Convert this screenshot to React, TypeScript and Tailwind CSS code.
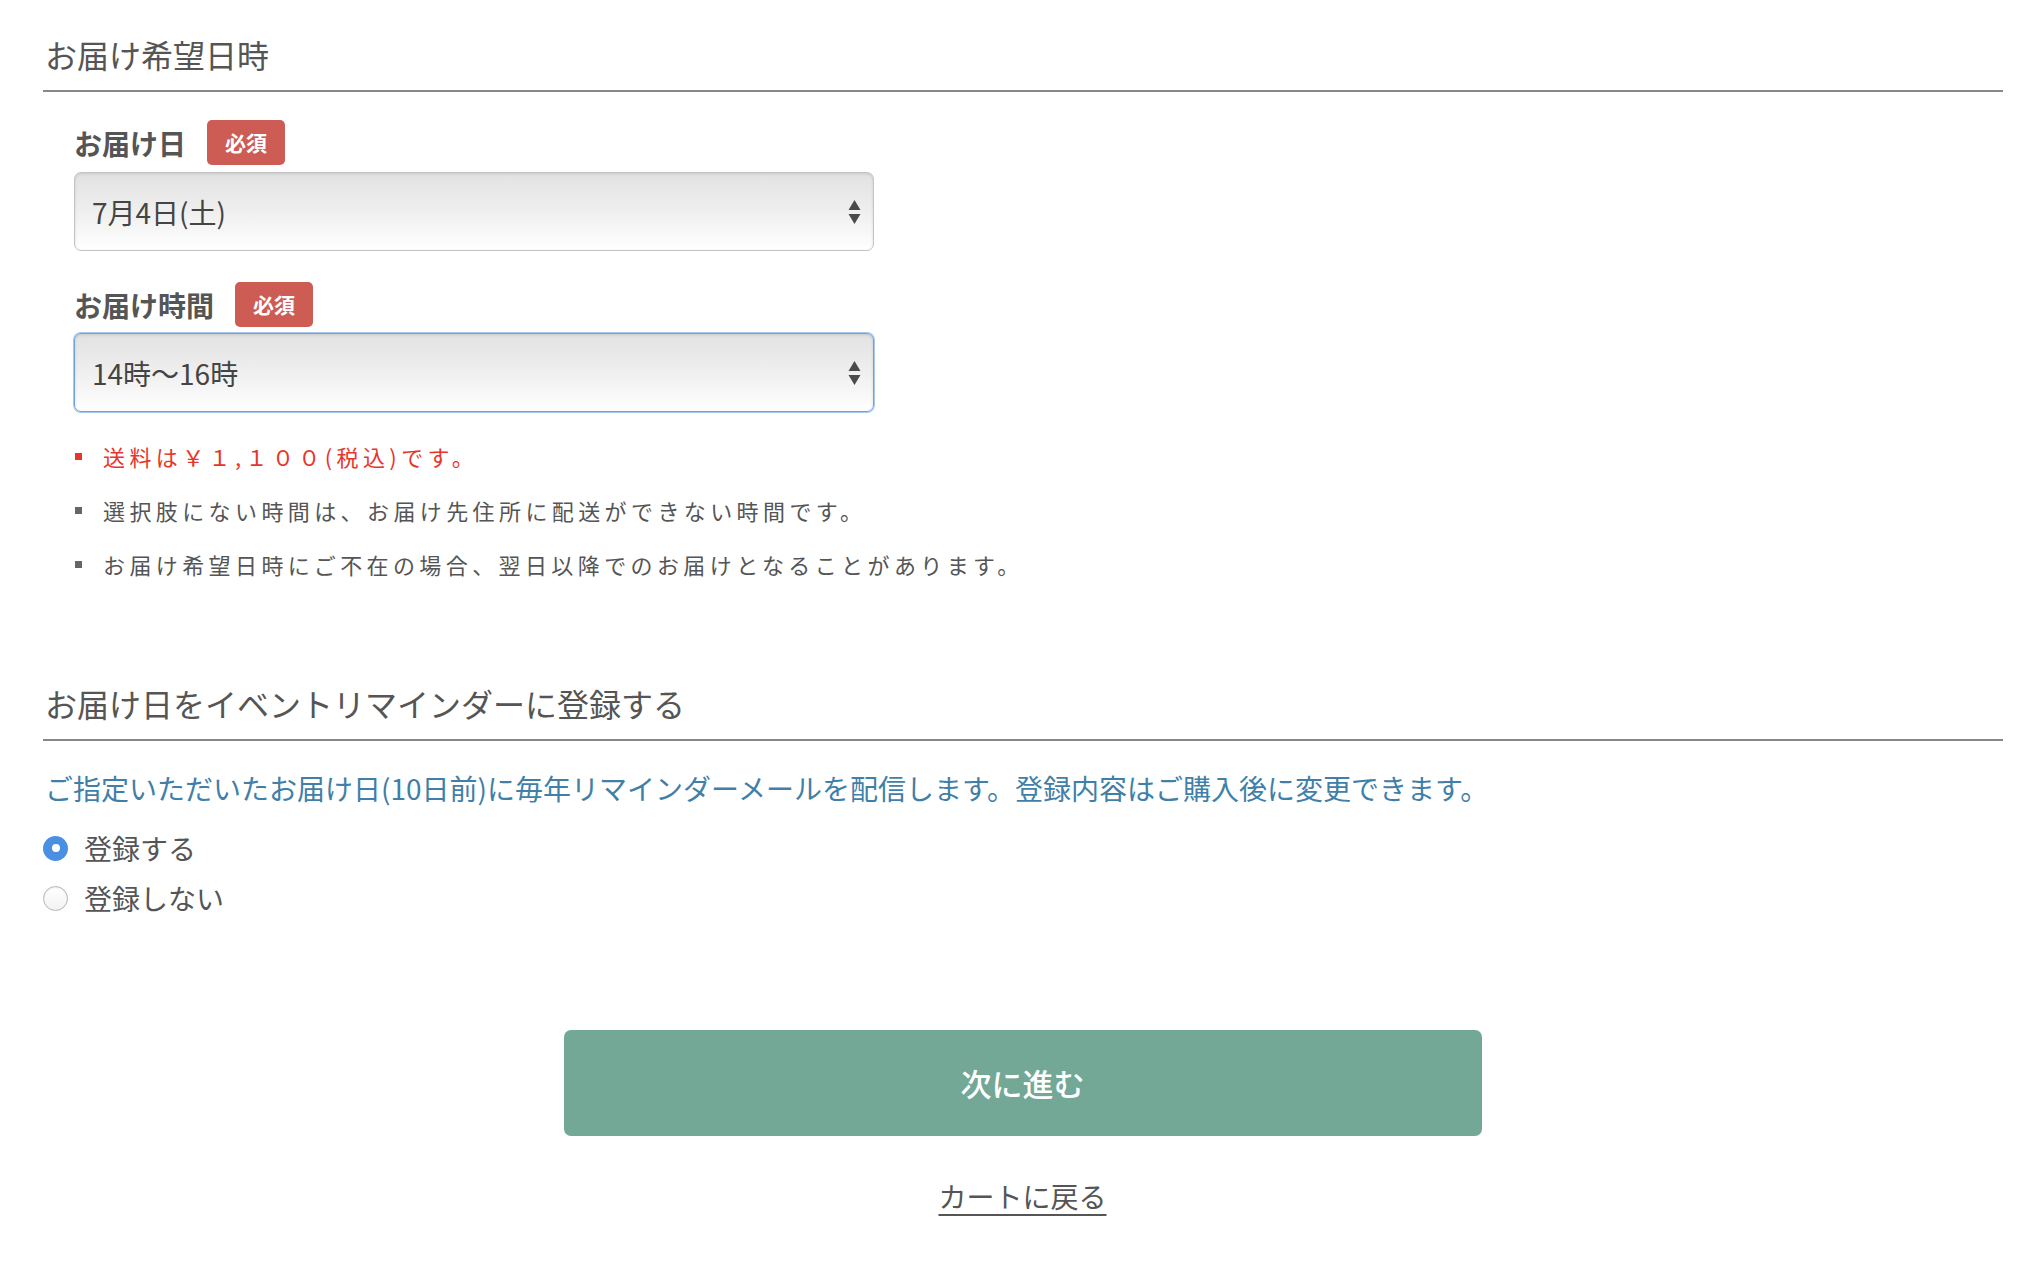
import React from "react";

const font = { fontFamily: '"Noto Sans CJK JP", "Noto Sans", sans-serif' };

function Badge() {
  return (
    <span className="inline-flex h-[45px] w-[78px] items-center justify-center rounded-[5px] bg-[#cd5c54] text-[21px] font-bold text-white">
      必須
    </span>
  );
}

function Arrows() {
  return (
    <svg
      className="pointer-events-none absolute right-[13px] top-1/2 -translate-y-1/2"
      width="13"
      height="26"
      viewBox="0 0 13 26"
    >
      <path d="M6.5 1 L12.5 11 L0.5 11 Z" fill="#4a4a4a" />
      <path d="M0.5 15 L12.5 15 L6.5 25 Z" fill="#4a4a4a" />
    </svg>
  );
}

function FakeSelect({ value, focused }: { value: string; focused?: boolean }) {
  return (
    <div className="relative w-[800px]">
      <select
        defaultValue={value}
        className={
          "h-[79px] w-full appearance-none rounded-[7px] border bg-gradient-to-b from-[#e2e2e2] via-[#efefef] to-[#ffffff] pl-[17px] text-[28px] text-[#444] outline-none " +
          (focused
            ? "border-[#6fa3dc] shadow-[0_0_0_1px_#a8c7ec,inset_0_1px_3px_rgba(0,0,0,0.12)]"
            : "border-[#c4c4c4] shadow-[inset_0_1px_3px_rgba(0,0,0,0.12)]")
        }
        style={font}
      >
        <option>{value}</option>
      </select>
      <Arrows />
    </div>
  );
}

function SectionTitle({ children }: { children: React.ReactNode }) {
  return (
    <div className="border-b-2 border-[#888888] pb-[13px]">
      <h2 className="pl-[2px] text-[32px] leading-[46px] font-normal text-[#555555]">{children}</h2>
    </div>
  );
}

function Bullet({ children, red }: { children: React.ReactNode; red?: boolean }) {
  return (
    <li className={"flex h-[54px] items-center text-[22px] tracking-[4.4px] " + (red ? "text-[#e8352b]" : "text-[#555555]")}>
      <span className={"mr-[21px] inline-block h-[7px] w-[7px] " + (red ? "bg-[#e8352b]" : "bg-[#666666]")} />
      <span>{children}</span>
    </li>
  );
}

export default function App() {
  return (
    <div className="min-h-[1270px] w-full bg-white pl-[43px] pr-[18px] pt-[31px]" style={font}>
      <SectionTitle>お届け希望日時</SectionTitle>

      <div className="pl-[31px] pt-[28px]">
        <div className="mb-[7px] flex items-center gap-[21px]">
          <span className="text-[28px] font-bold text-[#555555]">お届け日</span>
          <Badge />
        </div>
        <FakeSelect value="7月4日(土)" />

        <div className="mb-[6px] mt-[31px] flex items-center gap-[21px]">
          <span className="text-[28px] font-bold text-[#555555]">お届け時間</span>
          <Badge />
        </div>
        <FakeSelect value="14時〜16時" focused />

        <ul className="mt-[17px] pl-[1px]">
          <Bullet red>送料は￥１,１００(税込)です。</Bullet>
          <Bullet>選択肢にない時間は、お届け先住所に配送ができない時間です。</Bullet>
          <Bullet>お届け希望日時にご不在の場合、翌日以降でのお届けとなることがあります。</Bullet>
        </ul>
      </div>

      <div className="mt-[89px]">
        <SectionTitle>お届け日をイベントリマインダーに登録する</SectionTitle>
      </div>

      <p className="mt-[27px] pl-[2px] text-[28px] leading-[40px] text-[#3f7fa8]">
        ご指定いただいたお届け日(10日前)に毎年リマインダーメールを配信します。登録内容はご購入後に変更できます。
      </p>

      <div className="mt-[15px]">
        <label className="flex h-[50px] items-center">
          <span className="flex h-[25px] w-[25px] items-center justify-center rounded-full bg-[#4a90e2]">
            <span className="h-[8px] w-[8px] rounded-full bg-white" />
          </span>
          <span className="ml-[16px] text-[28px] text-[#555555]">登録する</span>
        </label>
        <label className="flex h-[50px] items-center">
          <span className="h-[25px] w-[25px] rounded-full border border-[#b5b5b5] bg-gradient-to-b from-white to-[#f3f3f3] shadow-[inset_0_1px_2px_rgba(0,0,0,0.08)]" />
          <span className="ml-[16px] text-[28px] text-[#555555]">登録しない</span>
        </label>
      </div>

      <div className="mt-[107px] flex flex-col items-center pr-[1px]">
        <button className="flex h-[106px] w-[918px] items-center justify-center rounded-[7px] bg-[#73a896] text-[31px] font-medium text-white" style={font}>
          次に進む
        </button>
        <a className="mt-[40px] text-[28px] leading-[40px] text-[#555555] underline underline-offset-[6px]" href="#">
          カートに戻る
        </a>
      </div>
    </div>
  );
}
